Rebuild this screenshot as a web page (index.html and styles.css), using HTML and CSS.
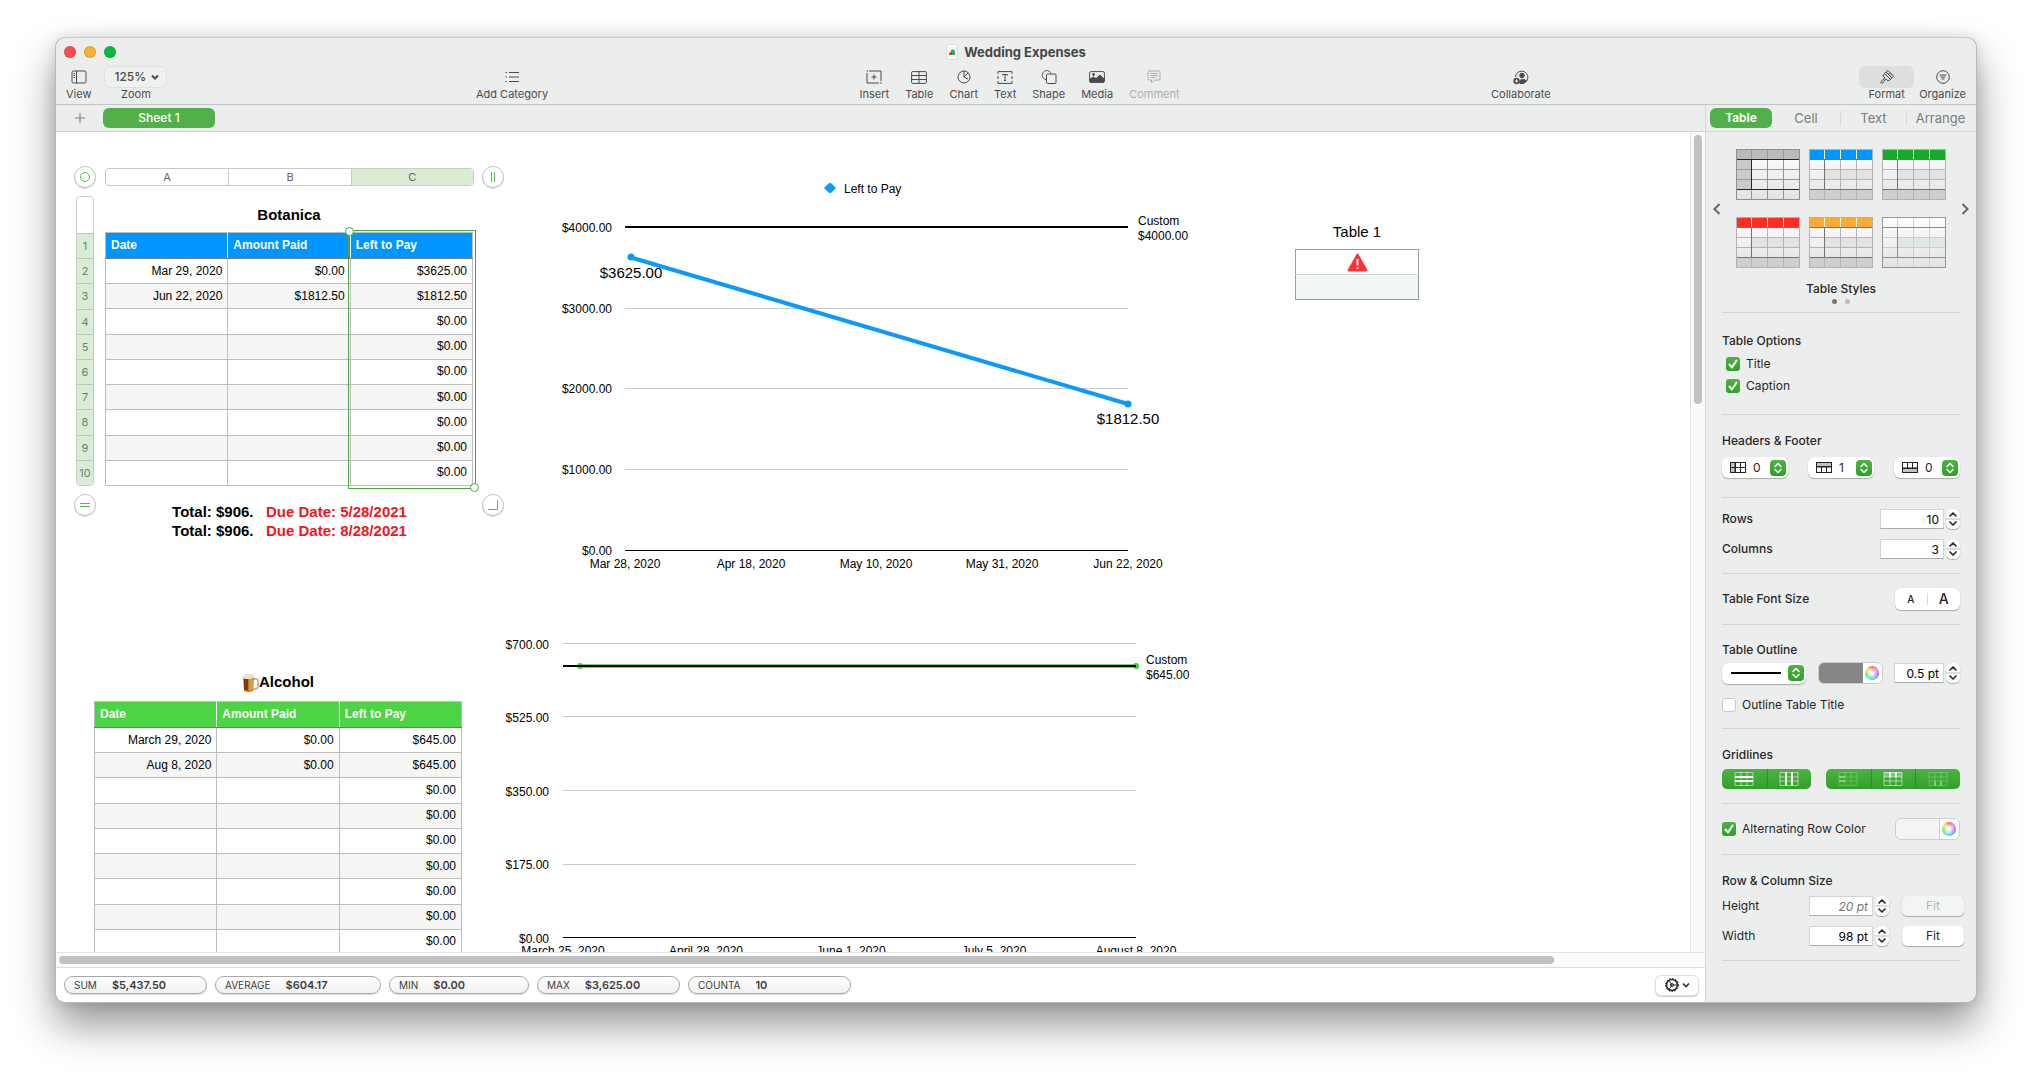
FILE: index.html
```html
<!DOCTYPE html>
<html lang="en">
<head>
<meta charset="utf-8">
<title>Wedding Expenses</title>
<link rel="stylesheet" href="styles.css">
</head>
<body>
<svg class="defs" aria-hidden="true">
  <defs>
    <linearGradient id="fade" x1="0" y1="0" x2="0" y2="1"><stop offset="0" stop-color="#fff"/><stop offset="1" stop-color="#e2e2e2"/></linearGradient>
    <symbol id="style-color" viewBox="0 0 64 51">
      <rect width="64" height="51" fill="url(#fade)"/>
      <rect x="16" y="20" width="48" height="10" fill="#e4e3e1"/>
      <rect y="41" width="64" height="10" fill="#cfcfcd"/>
      <rect width="64" height="10" fill="currentColor"/>
      <path d="M15.500 0V10M31.500 0V10M47.500 0V10" stroke="#fff"/>
      <path d="M31.500 11V51M47.500 11V51M15.500 41V51M0 20.500H64M0 30.500H64" stroke="#b4b4b2"/>
      <path d="M0 10.500H64M15.500 10V40M0 40.500H64" stroke="#77726e"/>
      <rect x=".5" y=".5" width="63" height="50" fill="none" stroke="#b0b0b0"/>
    </symbol>
    <symbol id="style-gray" viewBox="0 0 64 51">
      <rect width="64" height="51" fill="url(#fade)"/>
      <rect width="64" height="10" fill="#b9bbba"/>
      <rect y="10" width="15" height="30" fill="#cacaca"/>
      <path d="M31.500 0V51M47.500 0V51M15.500 0V51M0 20.500H64M0 30.500H64" stroke="#969696"/>
      <path d="M0 10.500H64M15.500 10V40M0 40.500H64" stroke="#26262a"/>
      <rect x=".5" y=".5" width="63" height="50" fill="none" stroke="#8e8e8e"/>
    </symbol>
    <symbol id="style-plain" viewBox="0 0 64 51">
      <rect width="64" height="51" fill="url(#fade)"/>
      <rect x="16" y="20" width="48" height="10" fill="#e0e5e5"/>
      <path d="M15.500 0V51M31.500 0V51M47.500 0V51M0 20.500H64M0 30.500H64" stroke="#cdcdcd"/>
      <path d="M0 10.500H64M15.500 10V40M0 40.500H64" stroke="#8c8c8c"/>
      <rect x=".5" y=".5" width="63" height="50" fill="none" stroke="#969696"/>
    </symbol>
    <symbol id="updown" viewBox="0 0 16 16"><path d="M5 6.500 8 3.500 11 6.500M5 9.500 8 12.500 11 9.500" fill="none" stroke="#fff" stroke-width="1.600" stroke-linecap="round" stroke-linejoin="round"/></symbol>
    <symbol id="up" viewBox="0 0 14 10"><path d="M4 7 7 4 10 7" fill="none" stroke="#2b2b2b" stroke-width="1.700" stroke-linecap="round" stroke-linejoin="round"/></symbol>
    <symbol id="down" viewBox="0 0 14 10"><path d="M4 3 7 6 10 3" fill="none" stroke="#2b2b2b" stroke-width="1.700" stroke-linecap="round" stroke-linejoin="round"/></symbol>
    <symbol id="cells" viewBox="0 0 20 14"><path d="M1 .5H19V13.500H1ZM7 .5V13.500M13 .5V13.500M1 5H19M1 9H19" fill="none" stroke="#fff" stroke-opacity=".55"/></symbol>
  </defs>
</svg>

<div class="window">
  <header class="header">
    <div class="titlebar">
      <div class="lights">
        <button class="light light-red" aria-label="Close"></button>
        <button class="light light-yellow" aria-label="Minimize"></button>
        <button class="light light-green" aria-label="Zoom window"></button>
      </div>
      <h1 class="title">
        <svg width="12" height="16" viewBox="0 0 12 16" aria-hidden="true"><rect x=".5" y=".5" width="11" height="15" rx="1" fill="#fafafa" stroke="#dcdcdc"/><path d="M3 11V9L5 8V11Z" fill="#e33"/><path d="M5 11V7L6 5V11Z" fill="#36a"/><path d="M6 11V5L9 7V11Z" fill="#2a5"/></svg>
        Wedding Expenses
      </h1>
    </div>
    <nav class="toolbar">
      <div class="tools tools-left">
        <button class="tool"><span class="tool-icon"><svg width="16" height="14" viewBox="0 0 16 14"><rect x="1" y="1" width="14" height="12" rx="1.500"/><path d="M5.500 1V13M2.500 3.500H4M2.500 5.500H4M2.500 7.500H4"/></svg></span>View</button>
        <label class="tool"><span class="zoom"><select class="zoom-select"><option>125%</option></select><svg width="8" height="6" viewBox="0 0 8 6"><path d="M1 1.500 4 4.500 7 1.500"/></svg></span>Zoom</label>
      </div>
      <div class="tools">
        <button class="tool"><span class="tool-icon"><svg width="14" height="12" viewBox="0 0 14 12"><path d="M4 1.500H14M4 6H14M4 10.500H14M.5 1.500H2M.5 6H2M.5 10.500H2"/></svg></span>Add Category</button>
      </div>
      <div class="tools tools-center">
        <button class="tool"><span class="tool-icon"><svg width="16" height="14" viewBox="0 0 16 14"><path d="M3 1H15V11M13 13H1V3M8 4.500V9.500M5.500 7H10.500"/><path d="M.5 1H2M14 13H15.500" /></svg></span>Insert</button>
        <button class="tool"><span class="tool-icon"><svg width="16" height="13" viewBox="0 0 16 13"><rect x=".6" y=".6" width="14.800" height="11.800" rx="1"/><path d="M8 .5V12.500M.5 4.500H15.500M.5 8.500H15.500"/></svg></span>Table</button>
        <button class="tool"><span class="tool-icon"><svg width="14" height="14" viewBox="0 0 14 14"><circle cx="7" cy="7" r="6"/><path d="M7 1V7L11 3M7 7 11 9"/></svg></span>Chart</button>
        <button class="tool"><span class="tool-icon"><svg width="16" height="13" viewBox="0 0 16 13"><path d="M1 3V.6H15V3M1 10V12.400H15V10M1 5V8M15 5V8M5.500 4.500V3.500H10.500V4.500M8 3.500V9.500M7 9.500H9"/></svg></span>Text</button>
        <button class="tool"><span class="tool-icon"><svg width="16" height="14" viewBox="0 0 16 14"><path d="M5 9.500A4.500 4.500 0 1 1 10 3.500"/><rect x="5.500" y="4" width="9.500" height="9.500" rx="1"/></svg></span>Shape</button>
        <button class="tool"><span class="tool-icon"><svg width="16" height="12" viewBox="0 0 16 12"><rect x=".6" y=".6" width="14.800" height="10.800" rx="1.500"/><path d="M1 11V8L4.500 6 7 7.500 11 4 15 8V11Z" fill="currentColor"/><circle cx="4.500" cy="3.500" r="1" fill="currentColor"/></svg></span>Media</button>
        <button class="tool" disabled><span class="tool-icon"><svg width="14" height="14" viewBox="0 0 14 14"><path d="M2 1H12A1 1 0 0 1 13 2V9A1 1 0 0 1 12 10H7.500L4.500 13V10H2A1 1 0 0 1 1 9V2A1 1 0 0 1 2 1ZM3.500 3.500H10.500M3.500 5.500H10.500M3.500 7.500H8.500"/></svg></span>Comment</button>
      </div>
      <div class="tools">
        <button class="tool"><span class="tool-icon"><svg width="16" height="15" viewBox="0 0 16 15"><path d="M2.500 7A6.200 6.200 0 1 1 8 13.500"/><circle cx="9" cy="5.500" r="2.300" fill="currentColor"/><path d="M6 12.500C6 9 12 8.500 13.500 11L10 13.500H7Z" fill="currentColor"/><circle cx="3.500" cy="11" r="3.200" fill="currentColor" stroke="none"/><path d="M3.500 9.300V12.700M1.800 11H5.200" stroke="#eceeed"/></svg></span>Collaborate</button>
      </div>
      <div class="tools tools-right">
        <button class="tool"><span class="tool-icon tool-active"><svg width="16" height="16" viewBox="0 0 16 16"><path d="M9 1.500 14.500 7 11.500 10.500 5.500 4.500ZM5.500 4.500 4 7 6 9 1.500 13 3 14.500 7 10 9 12 11.500 10.500M7 3 13 9M11 3.500 9.500 5M12.500 5 11 6.500"/></svg></span>Format</button>
        <button class="tool"><span class="tool-icon"><svg width="14" height="14" viewBox="0 0 14 14"><circle cx="7" cy="7" r="6.300"/><path d="M3.500 5H10.500M4.500 7H9.500M5.500 9H8.500"/></svg></span>Organize</button>
      </div>
    </nav>
  </header>

  <div class="body">
    <main class="main">
      <div class="sheetbar">
        <button class="add" aria-label="Add sheet"><svg width="10" height="10" viewBox="0 0 10 10"><path d="M5 0V10M0 5H10"/></svg></button>
        <button class="sheet-tab">Sheet 1</button>
      </div>

      <div class="view">
        <div class="canvas">
          <section class="editor">
            <button class="knob" aria-label="Select table"><svg width="12" height="12" viewBox="0 0 12 12"><circle cx="6" cy="6" r="4.500"/></svg></button>
            <div class="cols"><span>A</span><span>B</span><span class="on">C</span></div>
            <button class="knob" aria-label="Add column"><svg width="12" height="12" viewBox="0 0 12 12"><path d="M4.500 1V11M7.500 1V11"/></svg></button>
            <div class="rows"><span class="blank"></span><span>1</span><span>2</span><span>3</span><span>4</span><span>5</span><span>6</span><span>7</span><span>8</span><span>9</span><span>10</span></div>
            <div class="selected">
              <table class="grid grid-blue">
                <caption>Botanica</caption>
                <thead><tr><th>Date</th><th>Amount Paid</th><th>Left to Pay</th></tr></thead>
                <tbody>
                  <tr><td>Mar 29, 2020</td><td>$0.00</td><td>$3625.00</td></tr>
                  <tr><td>Jun 22, 2020</td><td>$1812.50</td><td>$1812.50</td></tr>
                  <tr><td></td><td></td><td>$0.00</td></tr>
                  <tr><td></td><td></td><td>$0.00</td></tr>
                  <tr><td></td><td></td><td>$0.00</td></tr>
                  <tr><td></td><td></td><td>$0.00</td></tr>
                  <tr><td></td><td></td><td>$0.00</td></tr>
                  <tr><td></td><td></td><td>$0.00</td></tr>
                  <tr><td></td><td></td><td>$0.00</td></tr>
                </tbody>
              </table>
              <div class="selection"></div>
            </div>
            <span></span>
            <button class="knob" aria-label="Add row"><svg width="12" height="12" viewBox="0 0 12 12"><path d="M1 4.500H11M1 7.500H11"/></svg></button>
            <p class="note">Total: $906. &nbsp; <span class="due">Due Date: 5/28/2021</span><br>Total: $906. &nbsp; <span class="due">Due Date: 8/28/2021</span></p>
            <button class="knob" aria-label="Resize table"><svg width="12" height="12" viewBox="0 0 12 12"><path d="M10.500 1V10.500H1"/></svg></button>
          </section>

          <section class="alcohol">
            <table class="grid grid-green">
              <caption><svg class="beer" width="17" height="20" viewBox="0 0 17 20" role="img" aria-label="Beer"><path d="M11 6H14Q16 6 16 8V13Q16 16 13 16H11" fill="none" stroke="#c9b7a4" stroke-width="2"/><path d="M1 4H12L11 18Q6.500 20 2 18Z" fill="#b9752c"/><path d="M3 6V17M5 6V17" stroke="#5e2d10" stroke-width="1.500"/><path d="M8 6V18M10 6V17" stroke="#eea23a" stroke-width="1.500"/><path d="M0 4Q0 1 3 2Q5 0 7 1Q12 0 12 4Q11 6 6 6Q1 6 0 4Z" fill="#e9e2d6"/></svg>Alcohol</caption>
              <thead><tr><th>Date</th><th>Amount Paid</th><th>Left to Pay</th></tr></thead>
              <tbody>
                <tr><td>March 29, 2020</td><td>$0.00</td><td>$645.00</td></tr>
                <tr><td>Aug 8, 2020</td><td>$0.00</td><td>$645.00</td></tr>
                <tr><td></td><td></td><td>$0.00</td></tr>
                <tr><td></td><td></td><td>$0.00</td></tr>
                <tr><td></td><td></td><td>$0.00</td></tr>
                <tr><td></td><td></td><td>$0.00</td></tr>
                <tr><td></td><td></td><td>$0.00</td></tr>
                <tr><td></td><td></td><td>$0.00</td></tr>
                <tr><td></td><td></td><td>$0.00</td></tr>
              </tbody>
            </table>
          </section>

          <svg class="chart chart-left" width="680" height="410" viewBox="0 0 680 410" role="img" aria-label="Left to Pay by date">
            <g class="gridline"><path d="M85 138.500H588M85 218.500H588M85 299.500H588"/></g>
            <path class="axis" d="M85 380.500H588"/>
            <path class="target" d="M85 57H588"/>
            <path class="series-blue" d="M91 87.500 588 234"/>
            <circle cx="91" cy="87" r="3.500" fill="#0a99ff"/><circle cx="588" cy="234" r="3.500" fill="#0a99ff"/>
            <path d="M284 18 288 14Q290 12 292 14L296 18 292 22Q290 24 288 22Z" fill="#0a99ff"/>
            <text x="304" y="23">Left to Pay</text>
            <g text-anchor="end"><text x="72" y="62">$4000.00</text><text x="72" y="143">$3000.00</text><text x="72" y="223">$2000.00</text><text x="72" y="304">$1000.00</text><text x="72" y="385">$0.00</text></g>
            <g text-anchor="middle"><text x="85" y="398">Mar 28, 2020</text><text x="211" y="398">Apr 18, 2020</text><text x="336" y="398">May 10, 2020</text><text x="462" y="398">May 31, 2020</text><text x="588" y="398">Jun 22, 2020</text></g>
            <g text-anchor="middle" class="value"><text x="91" y="108">$3625.00</text><text x="588" y="254">$1812.50</text></g>
            <text x="598" y="55">Custom</text><text x="598" y="70">$4000.00</text>
          </svg>

          <svg class="chart chart-alcohol" width="740" height="350" viewBox="0 0 740 350" role="img" aria-label="Alcohol balance by date">
            <g class="gridline"><path d="M63 23.500H636M63 96.500H636M63 170.500H636M63 244.500H636"/></g>
            <path class="axis" d="M63 317.500H636"/>
            <path class="series-green" d="M80 46H636"/>
            <circle cx="80" cy="46" r="3" fill="#3ecf3a"/><circle cx="636" cy="46" r="3" fill="#3ecf3a"/>
            <path class="target" d="M63 46H636"/>
            <g text-anchor="end"><text x="49" y="29">$700.00</text><text x="49" y="102">$525.00</text><text x="49" y="176">$350.00</text><text x="49" y="249">$175.00</text><text x="49" y="323">$0.00</text></g>
            <g text-anchor="middle"><text x="63" y="335">March 25, 2020</text><text x="206" y="335">April 28, 2020</text><text x="351" y="335">June 1, 2020</text><text x="494" y="335">July 5, 2020</text><text x="636" y="335">August 8, 2020</text></g>
            <text x="646" y="44">Custom</text><text x="646" y="59">$645.00</text>
          </svg>

          <section class="mini">
            <table class="mini-table">
              <caption>Table 1</caption>
              <tbody>
                <tr><td><svg width="21" height="19" viewBox="0 0 21 19" role="img" aria-label="Error"><path d="M10.500 1.500 19.500 17.500H1.500Z" fill="#ff2f33" stroke="#ff2f33" stroke-width="2" stroke-linejoin="round"/><path d="M10.500 6V12.500M10.500 14.500V16" stroke="#fff" stroke-width="2"/></svg></td></tr>
                <tr><td></td></tr>
              </tbody>
            </table>
          </section>
        </div>
        <div class="vtrack"><div class="vthumb"></div></div>
      </div>
      <div class="htrack"><div class="hthumb"></div></div>

      <footer class="footer">
        <button class="pill pill-sum">SUM <b>$5,437.50</b></button>
        <button class="pill pill-average">AVERAGE <b>$604.17</b></button>
        <button class="pill pill-min">MIN <b>$0.00</b></button>
        <button class="pill pill-max">MAX <b>$3,625.00</b></button>
        <button class="pill pill-counta">COUNTA <b>10</b></button>
        <button class="gear" aria-label="Function options"><svg width="14" height="14" viewBox="0 0 14 14"><circle cx="7" cy="7" r="5.500" stroke-width="1.600"/><circle cx="7" cy="7" r="6.500" stroke-dasharray="1.500 1.500" stroke-width="1"/><path d="M7 7H12.500M7 7 4 2.500M7 7 4 11.500"/><circle cx="7" cy="7" r="1.500"/></svg><svg width="8" height="6" viewBox="0 0 8 6"><path d="M1 1.500 4 4.500 7 1.500" stroke-width="1.600"/></svg></button>
      </footer>
    </main>

    <aside class="inspector">
      <div class="tabs">
        <button class="tab tab-on">Table</button><button class="tab">Cell</button><button class="tab tab-rule">Text</button><button class="tab tab-rule">Arrange</button>
      </div>

      <section class="panel panel-styles">
        <div class="carousel">
          <button class="arrow" aria-label="Previous styles"><svg width="8" height="12" viewBox="0 0 8 12"><path d="M6.500 1 1.500 6 6.500 11"/></svg></button>
          <div class="thumbs">
            <button class="thumb" aria-label="Gray style"><svg><use href="#style-gray"/></svg></button>
            <button class="thumb blue" aria-label="Blue style"><svg><use href="#style-color"/></svg></button>
            <button class="thumb green" aria-label="Green style"><svg><use href="#style-color"/></svg></button>
            <button class="thumb red" aria-label="Red style"><svg><use href="#style-color"/></svg></button>
            <button class="thumb orange" aria-label="Orange style"><svg><use href="#style-color"/></svg></button>
            <button class="thumb" aria-label="Plain style"><svg><use href="#style-plain"/></svg></button>
          </div>
          <button class="arrow" aria-label="Next styles"><svg width="8" height="12" viewBox="0 0 8 12"><path d="M1.500 1 6.500 6 1.500 11"/></svg></button>
        </div>
        <h2 class="styles-name">Table Styles</h2>
        <div class="dots"><i class="dot dot-on"></i><i class="dot"></i></div>
      </section>

      <section class="panel panel-options">
        <h2>Table Options</h2>
        <label class="check check-in"><input type="checkbox" checked>Title</label>
        <label class="check check-in"><input type="checkbox" checked>Caption</label>
      </section>

      <section class="panel panel-headers">
        <h2>Headers &amp; Footer</h2>
        <div class="split">
          <label class="popup"><svg width="16" height="11" viewBox="0 0 16 11"><path d="M0 0H16V11H0Z" fill="#fff"/><path d="M0 0H5V11H0Z" fill="#c4c4c4"/><path d="M.5 .5H15.500V10.500H.5ZM5.500 0V11M10.500 0V11M0 5.500H16"/></svg><select aria-label="Header columns"><option>0</option></select><svg class="updown"><use href="#updown"/></svg></label>
          <label class="popup"><svg width="16" height="11" viewBox="0 0 16 11"><path d="M0 0H16V11H0Z" fill="#fff"/><path d="M0 0H16V5H0Z" fill="#c4c4c4"/><path d="M.5 .5H15.500V10.500H.5ZM0 4.500H16M5.500 4V11M10.500 4V11"/></svg><select aria-label="Header rows"><option>1</option></select><svg class="updown"><use href="#updown"/></svg></label>
          <label class="popup"><svg width="16" height="11" viewBox="0 0 16 11"><path d="M0 0H16V11H0Z" fill="#fff"/><path d="M0 6H16V11H0Z" fill="#c4c4c4"/><path d="M.5 .5H15.500V10.500H.5ZM0 6.500H16M5.500 0V6M10.500 0V6"/></svg><select aria-label="Footer rows"><option>0</option></select><svg class="updown"><use href="#updown"/></svg></label>
        </div>
      </section>

      <section class="panel panel-count">
        <div class="field"><label class="grow" for="rows">Rows</label><input class="num" id="rows" value="10"><span class="stepper"><button aria-label="More rows"><svg><use href="#up"/></svg></button><button aria-label="Fewer rows"><svg><use href="#down"/></svg></button></span></div>
        <div class="field"><label class="grow" for="columns">Columns</label><input class="num" id="columns" value="3"><span class="stepper"><button aria-label="More columns"><svg><use href="#up"/></svg></button><button aria-label="Fewer columns"><svg><use href="#down"/></svg></button></span></div>
      </section>

      <section class="panel panel-font">
        <div class="split"><h2>Table Font Size</h2><div class="sizes"><button class="small-a">A</button><button class="big-a">A</button></div></div>
      </section>

      <section class="panel panel-outline">
        <h2>Table Outline</h2>
        <div class="split">
          <label class="popup popup-line"><svg width="50" height="2"><path d="M0 1H50" stroke="#000" stroke-width="2"/></svg><select aria-label="Line style"><option></option></select><svg class="updown"><use href="#updown"/></svg></label>
          <button class="well well-dark" aria-label="Outline color"><i class="wheel"></i></button>
          <div class="field"><input class="num num-short" aria-label="Outline width" value="0.5 pt"><span class="stepper"><button aria-label="Thicker"><svg><use href="#up"/></svg></button><button aria-label="Thinner"><svg><use href="#down"/></svg></button></span></div>
        </div>
        <label class="check"><input type="checkbox">Outline Table Title</label>
      </section>

      <section class="panel panel-lines">
        <h2>Gridlines</h2>
        <div class="split">
          <div class="segments">
            <button aria-label="Horizontal body gridlines"><svg width="20" height="14"><use href="#cells"/><path d="M1 5H19M1 9H19" stroke-width="2"/></svg></button>
            <button aria-label="Vertical body gridlines"><svg width="20" height="14"><use href="#cells"/><path d="M7 0V14M13 0V14" stroke-width="2"/></svg></button>
          </div>
          <div class="segments segments-three">
            <button class="dim" aria-label="Header column gridlines"><svg width="20" height="14"><use href="#cells"/><path d="M1 5H7M1 9H7" stroke-width="2"/></svg></button>
            <button aria-label="Header row gridlines"><svg width="20" height="14"><use href="#cells"/><path d="M1 0H19V5H1Z" fill="#fff" fill-opacity=".3" stroke="none"/><path d="M7 0V5M13 0V5" stroke-width="2"/></svg></button>
            <button class="dim" aria-label="Footer row gridlines"><svg width="20" height="14"><use href="#cells"/><path d="M7 9V14M13 9V14" stroke-width="2"/></svg></button>
          </div>
        </div>
      </section>

      <section class="panel panel-font">
        <div class="split"><label class="check"><input type="checkbox" checked>Alternating Row Color</label><button class="well" aria-label="Alternating color"><i class="wheel"></i></button></div>
      </section>

      <section class="panel panel-size">
        <h2>Row &amp; Column Size</h2>
        <div class="field fit-row"><label class="grow" for="height">Height</label><input class="num muted" id="height" value="20 pt"><span class="stepper"><button aria-label="Taller"><svg><use href="#up"/></svg></button><button aria-label="Shorter"><svg><use href="#down"/></svg></button></span><button class="fit" disabled>Fit</button></div>
        <div class="field fit-row"><label class="grow" for="width">Width</label><input class="num" id="width" value="98 pt"><span class="stepper"><button aria-label="Wider"><svg><use href="#up"/></svg></button><button aria-label="Narrower"><svg><use href="#down"/></svg></button></span><button class="fit">Fit</button></div>
      </section>
    </aside>
  </div>
</div>
</body>
</html>
```
FILE: styles.css
```css
* { box-sizing: border-box; }

body {
  margin: 0;
  height: 100vh;
  padding: 37px 55px 73px 55px;
  background: #fff;
  color: #262626;
  font: 12px/16px Inter, sans-serif;
  overflow: hidden;
}

button, select, input { font: inherit; color: inherit; margin: 0; }
button { padding: 0; border: 0; background: none; }
h1, h2, p { margin: 0; font-size: inherit; font-weight: inherit; }
svg { display: block; flex: none; fill: none; }
.defs { position: absolute; width: 0; height: 0; }

.window {
  height: 100%;
  display: flex;
  flex-direction: column;
  border: 1px solid #b8b8b8;
  border-top-color: #cacaca;
  border-radius: 10px;
  overflow: hidden;
  background: #eceeed;
  box-shadow: 0 22px 42px rgba(0, 0, 0, .42), 0 0 14px rgba(0, 0, 0, .12);
}

/* Title bar and toolbar */
.header { border-bottom: 1px solid #c3c5c4; color: #4a4b4a; }
.titlebar {
  display: grid;
  grid-template-columns: 1fr auto 1fr;
  align-items: center;
  height: 28px;
}
.lights { display: flex; gap: 8px; padding-left: 8px; }
.light { width: 12px; height: 12px; border-radius: 50%; border: 1px solid rgba(0, 0, 0, .12); }
.light-red { background: #ff4b4d; }
.light-yellow { background: #fdb033; }
.light-green { background: #09bb3c; }
.title { display: flex; align-items: center; gap: 6px; font-size: 13px; font-weight: 700; color: #454645; }

.toolbar { display: flex; justify-content: space-between; height: 38px; padding: 0 10px; }
.tools { display: flex; }
.tools-left { gap: 13px; }
.tools-center { gap: 16px; margin: 0 3px; }
.tools-right { gap: 5px; }
.tool { display: flex; flex-direction: column; align-items: center; font-size: 11px; line-height: 12px; }
.tool:disabled { color: #acaead; }
.tool svg { stroke: currentColor; }
.tool-icon { display: flex; align-items: center; justify-content: center; height: 22px; }
.tool-active { width: 55px; border-radius: 6px; background: #dddfde; }
.zoom {
  display: flex;
  align-items: center;
  width: 63px;
  height: 22px;
  padding: 0 7px 0 9px;
  border: 1px solid #dfe1e0;
  border-radius: 6px;
  background: #eff1f0;
}
.zoom svg { stroke-width: 2; }
.zoom-select { flex: 1; min-width: 0; padding: 0; border: 0; background: none; appearance: none; font-size: 12px; font-weight: 500; }

.body { flex: 1; min-height: 0; display: flex; }
.main { flex: 1; min-width: 0; display: flex; flex-direction: column; }

.sheetbar { display: flex; align-items: center; gap: 18px; height: 27px; padding-left: 19px; border-bottom: 1px solid #d2d4d3; }
.add svg { stroke: #777; }
.sheet-tab { width: 112px; height: 20px; border-radius: 6px; background: #52b04a; color: #fff; font-weight: 500; }

.view { flex: 1; min-height: 0; display: flex; background: #fff; }
.canvas { position: relative; flex: 1; overflow: hidden; color: #000; font: 12px/15px "Liberation Sans", Arial, sans-serif; }
.vtrack { width: 15px; padding: 3px; border-left: 1px solid #e3e3e3; background: #fafafa; }
.vthumb { width: 8px; height: 33%; border-radius: 4px; background: #c1c1c1; }
.htrack { height: 15px; padding: 3px 3px 0; border-top: 1px solid #e3e3e3; background: #fafafa; }
.hthumb { width: 91%; height: 8px; border-radius: 4px; background: #c1c1c1; }

/* Objects placed on the sheet */
.editor {
  position: absolute;
  left: 18px;
  top: 34px;
  display: grid;
  grid-template-columns: 23px 369px 22px;
  gap: 8px;
}
.knob {
  display: flex;
  align-items: center;
  justify-content: center;
  width: 22px;
  height: 22px;
  border: 1px solid #c4c4c4;
  border-radius: 50%;
  background: #fff;
  box-shadow: 0 1px 1px rgba(0, 0, 0, .12);
}
.knob svg { stroke: #5cb956; stroke-width: 1; }
.cols {
  display: grid;
  grid-template-columns: repeat(3, 1fr);
  align-self: center;
  height: 18px;
  border: 1px solid #c9c9c9;
  border-radius: 4px;
  overflow: hidden;
  color: #666;
  font: 11px/16px Inter, sans-serif;
  text-align: center;
}
.cols span + span { border-left: 1px solid #c9c9c9; }
.cols .on, .rows span { background: #d9edd4; }
.rows {
  display: grid;
  grid-template-rows: 36px repeat(10, 1fr);
  width: 18px;
  margin-left: 2px;
  border: 1px solid #c9c9c9;
  border-radius: 4px;
  overflow: hidden;
  color: #6f7d6d;
  font: 11px/24px Inter, sans-serif;
  text-align: center;
}
.rows span + span { border-top: 1px solid #bccbb8; }
.rows .blank { background: #fff; }
.selected { position: relative; }
.selection {
  position: absolute;
  left: 243px;
  right: -2px;
  top: 34px;
  bottom: -3px;
  border: 1px solid #47a93e;
}
.selection::before, .selection::after {
  content: "";
  position: absolute;
  width: 7px;
  height: 7px;
  border: 1px solid #47a93e;
  border-radius: 50%;
  background: #fff;
}
.selection::before { left: -4px; top: -4px; }
.selection::after { right: -4px; bottom: -4px; }

.grid { width: 368px; border-collapse: collapse; table-layout: fixed; }
.grid caption { height: 36px; padding-top: 2px; font-size: 15px; line-height: 34px; font-weight: 700; }
.grid th, .grid td { padding: 0 5px; border: 1px solid #bdbdbd; }
.grid th { height: 26px; color: #fff; text-align: left; border-bottom-color: #777; }
.grid th:not(:last-child) { border-right-color: #fff; }
.grid td { height: 25px; text-align: right; }
.grid tbody tr:nth-child(even) { background: #f5f5f4; }
.grid-blue { height: 254px; }
.grid-blue th { background: #0096ff; }
.grid-green { height: 254px; }
.grid-green caption { padding: 0 0 2px; }
.grid-green th { background: #4bd443; }
.beer { display: inline-block; vertical-align: middle; }

.note { padding-top: 8px; font-size: 15px; line-height: 19px; font-weight: 700; text-align: center; }
.due { color: #f3151c; }

.alcohol { position: absolute; left: 38px; top: 533px; }
.mini { position: absolute; left: 1239px; top: 91px; }
.mini-table { width: 124px; height: 51px; border: 1px solid #9c9c9c; border-collapse: collapse; }
.mini-table caption { height: 26px; font-size: 15px; line-height: 18px; }
.mini-table td { height: 25px; padding: 0; }
.mini-table svg { margin: 0 auto; }
.mini-table tr + tr { border-top: 1px solid #d3d7d8; background: #f0f6f6; }

.chart { position: absolute; }
.chart text { fill: #000; }
.chart .value { font-size: 15px; }
.chart-left { left: 484px; top: 38px; }
.chart-alcohol { left: 444px; top: 488px; }
.gridline { stroke: #c9c9c9; }
.axis { stroke: #000; stroke-width: 1; }
.target { stroke: #000; stroke-width: 2; }
.series-blue { stroke: #0a99ff; stroke-width: 4; }
.series-green { stroke: #6fd968; stroke-width: 4; }

/* Quick calculations */
.footer {
  display: flex;
  align-items: center;
  gap: 8px;
  height: 35px;
  padding: 0 6px 0 8px;
  border-top: 1px solid #dcdcdc;
  background: #fff;
}
.pill {
  display: flex;
  align-items: center;
  gap: 15px;
  height: 18px;
  padding: 0 9px;
  border: 1px solid #a9a9a9;
  border-radius: 9px;
  background: linear-gradient(#fff, #f0f0f0);
  box-shadow: 0 1px 1px rgba(0, 0, 0, .15);
  color: #3c3c3c;
  font-size: 10px;
}
.pill b { font-size: 11px; font-weight: 600; }
.pill-sum { width: 143px; }
.pill-average { width: 166px; }
.pill-min { width: 140px; }
.pill-max { width: 143px; }
.pill-counta { width: 163px; }
.gear {
  display: flex;
  align-items: center;
  justify-content: center;
  gap: 3px;
  width: 44px;
  height: 21px;
  margin-left: auto;
  border: 1px solid #dedede;
  border-radius: 6px;
  background: #fff;
  box-shadow: 0 1px 1px rgba(0, 0, 0, .2);
}
.gear svg { stroke: #2c2c2c; }

/* Inspector */
.inspector { width: 271px; border-left: 1px solid #d6d8d7; }
.inspector h2 { font-weight: 500; }
.tabs { display: grid; grid-template-columns: 62px 68px 66px 1fr; align-items: center; height: 27px; padding: 0 2px 0 4px; border-bottom: 1px solid #d2d4d3; }
.tab { height: 14px; color: #7a7b7a; font-size: 13px; line-height: 14px; }
.tab-rule { border-left: 1px solid #d8dad9; }
.tab-on { height: 20px; border-radius: 6px; background: #52b04a; color: #fff; font-size: 12px; font-weight: 600; }

.panel { margin: 0 16px; border-bottom: 1px solid #d3d5d4; }
.split { display: flex; align-items: center; justify-content: space-between; }
.field { display: flex; align-items: center; gap: 2px; }
.grow { flex: 1; font-weight: 500; }

.panel-styles { padding: 17px 0 8px; }
.carousel { display: flex; align-items: center; justify-content: space-between; margin: 0 -9px; }
.arrow { width: 8px; }
.arrow svg { stroke: #666; stroke-width: 2; }
.thumbs { display: grid; grid-template-columns: repeat(3, 64px); gap: 17px 9px; }
.thumb, .thumb svg { width: 64px; height: 51px; }
.blue { color: #0096ff; }
.green { color: #14ab2c; }
.red { color: #ff2d26; }
.orange { color: #ffa733; }
.styles-name { margin-top: 13px; text-align: center; }
.dots { display: flex; justify-content: center; gap: 8px; padding-top: 2px; }
.dot { width: 5px; height: 5px; border-radius: 50%; background: #bdbdbd; }
.dot-on { background: #777; }

.panel-options { padding: 20px 0 17px; }
.panel-options h2 { margin-bottom: 4px; }
.check { display: flex; align-items: center; gap: 6px; height: 22px; }
.check-in { padding-left: 4px; }
.check input {
  width: 14px;
  height: 14px;
  appearance: none;
  border: 1px solid #c6c8c7;
  border-radius: 3px;
  background: #fff;
}
.check input:checked {
  border: 0;
  background: url("data:image/svg+xml,%3Csvg xmlns='http://www.w3.org/2000/svg' viewBox='0 0 14 14'%3E%3Cpath d='M3.500 7.500 6 10.500 10.500 3.500' fill='none' stroke='white' stroke-width='2' stroke-linecap='round' stroke-linejoin='round'/%3E%3C/svg%3E"), linear-gradient(#4db243, #2fa127);
}

.panel-headers { padding: 18px 0 19px; }
.panel-headers h2 { margin-bottom: 8px; }
.popup {
  display: flex;
  align-items: center;
  gap: 7px;
  width: 66px;
  height: 21px;
  padding: 0 2px 0 8px;
  border-radius: 6px;
  background: #fff;
  box-shadow: 0 1px 1px rgba(0, 0, 0, .28), 0 0 1px rgba(0, 0, 0, .15);
}
.popup > svg:first-child { stroke: #222; }
.popup select { flex: 1; min-width: 0; width: 0; padding: 0; border: 0; background: none; appearance: none; }
.popup-line { gap: 2px; width: 84px; padding-left: 9px; }
.updown { width: 16px; height: 16px; border-radius: 4px; background: linear-gradient(#4db243, #2fa127); }

.panel-count { display: grid; gap: 10px; padding: 11px 0 14px; }
.num {
  width: 64px;
  height: 20px;
  padding: 0 4px;
  border: 1px solid #d3d5d4;
  border-bottom-color: #a9abaa;
  background: #fff;
  color: #000;
  text-align: right;
}
.num-short { width: 50px; }
.muted { color: #777; font-style: italic; }
.stepper {
  display: grid;
  width: 14px;
  height: 20px;
  border-radius: 6px;
  background: linear-gradient(#fff 9px, #dcdcdc 9px, #dcdcdc 11px, #fff 11px);
  box-shadow: 0 1px 1px rgba(0, 0, 0, .28), 0 0 1px rgba(0, 0, 0, .2);
}
.stepper svg { width: 14px; height: 10px; }

.panel-font { padding: 14px 0; }
.sizes {
  display: grid;
  grid-template-columns: 1fr 1fr;
  align-items: center;
  width: 65px;
  height: 22px;
  border-radius: 6px;
  background: #fff;
  box-shadow: 0 1px 1px rgba(0, 0, 0, .28), 0 0 1px rgba(0, 0, 0, .15);
}
.small-a { border-right: 1px solid #dcdcdc; font-size: 10px; line-height: 12px; font-weight: 500; }
.big-a { font-size: 14px; font-weight: 500; }

.panel-outline { padding: 17px 0 12px; }
.panel-outline h2 { margin-bottom: 4px; }
.panel-outline .check { margin-top: 10px; }
.well {
  display: flex;
  align-items: center;
  justify-content: flex-end;
  width: 65px;
  height: 22px;
  padding-right: 3px;
  border: 1px solid #cbcdcc;
  border-radius: 6px;
  background: linear-gradient(90deg, #f4f4f2 43px, #d0d0d0 43px, #d0d0d0 44px, #fff 44px);
}
.well-dark { background: linear-gradient(90deg, #868686 44px, #fff 44px); }
.wheel {
  width: 14px;
  height: 14px;
  border-radius: 50%;
  background: radial-gradient(#fff 10%, rgba(255, 255, 255, 0) 75%), conic-gradient(#ff4a3d, #ff5be0, #7a5cff, #4aa8ff, #3ee6d0, #63e24a, #e7e743, #ff4a3d);
}

.panel-lines { padding: 18px 0 14px; }
.panel-lines h2 { margin-bottom: 6px; }
.segments {
  display: grid;
  grid-template-columns: 1fr 1fr;
  width: 89px;
  height: 20px;
  border-radius: 5px;
  background: linear-gradient(#4db243, #2fa127);
}
.segments-three { grid-template-columns: repeat(3, 1fr); width: 134px; }
.segments button { display: flex; align-items: center; justify-content: center; }
.segments button + button { border-left: 1px solid #2f8f28; }
.segments svg { stroke: #fff; }
.dim svg { opacity: .4; }

.panel-size { padding: 18px 0 14px; }
.panel-size h2 { margin-bottom: 7px; }
.panel-size .grow { font-weight: 400; }
.fit-row { margin-right: -4px; }
.fit-row + .fit-row { margin-top: 10px; }
.fit {
  width: 62px;
  height: 20px;
  margin-left: 11px;
  border-radius: 5px;
  background: #fff;
  box-shadow: 0 1px 1px rgba(0, 0, 0, .28), 0 0 1px rgba(0, 0, 0, .15);
}
.fit:disabled { background: #f3f4f4; color: #b5b6b5; }
```
